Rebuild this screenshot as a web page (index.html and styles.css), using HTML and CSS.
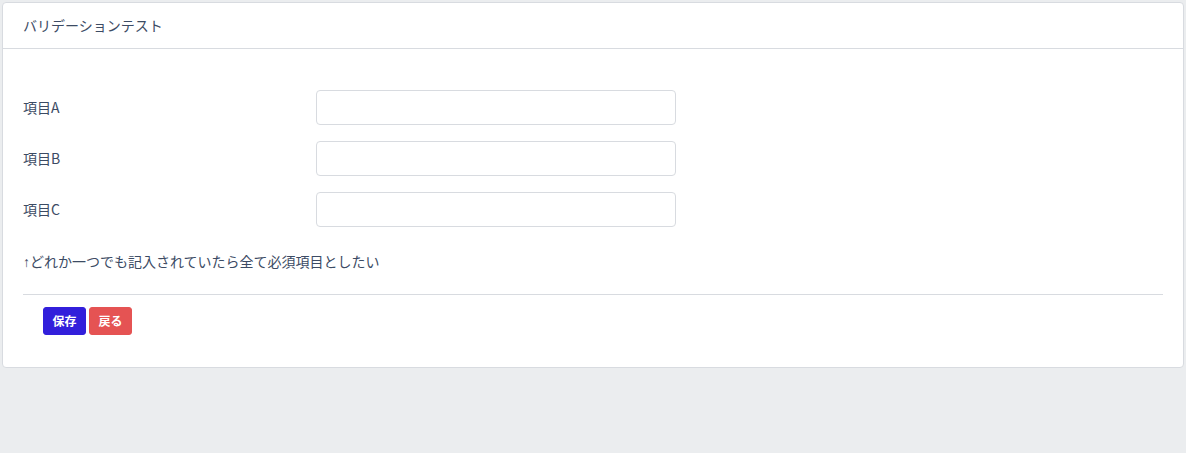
FILE: index.html
```html
<!DOCTYPE html>
<html lang="ja">
<head>
<meta charset="utf-8">
<title>バリデーションテスト</title>
<link rel="stylesheet" href="styles.css">
</head>
<body>
<div class="card">
  <div class="card-header">バリデーションテスト</div>
  <div class="card-body">
    <form class="form">
      <div class="row">
        <label class="label">項目A</label>
        <input class="input" type="text">
      </div>
      <div class="row">
        <label class="label">項目B</label>
        <input class="input" type="text">
      </div>
      <div class="row">
        <label class="label">項目C</label>
        <input class="input" type="text">
      </div>
      <p class="note"><span class="arrow">↑</span>どれか一つでも記入されていたら全て必須項目としたい</p>
      <hr class="divider">
      <div class="actions">
        <button type="button" class="btn btn-primary">保存</button>
        <button type="button" class="btn btn-danger">戻る</button>
      </div>
    </form>
  </div>
</div>
</body>
</html>
```

FILE: styles.css
```css
* { box-sizing: border-box; }
html, body { height: 100%; }
body {
  margin: 0;
  padding: 2px;
  background: #ebedef;
  font-family: "Noto Sans CJK JP", "Noto Sans", sans-serif;
  font-size: 14px;
  line-height: 1.5;
  color: #3c4b64;
}
.card {
  background: #fff;
  border: 1px solid #d8dbe0;
  border-radius: 4px;
}
.card-header {
  height: 46px;
  padding: 0 20px;
  display: flex;
  align-items: center;
  border-bottom: 1px solid #d8dbe0;
}
.card-body {
  padding: 41px 20px 32px;
}
.form { margin: 0; }
.row {
  display: grid;
  grid-template-columns: 293px 360px;
  align-items: center;
  margin-bottom: 16px;
}
.row:nth-of-type(3) { margin-bottom: 0; }
.label { display: block; }
.input {
  height: 35px;
  width: 360px;
  border: 1px solid #d8dbe0;
  border-radius: 4px;
  background: #fff;
  padding: 6px 12px;
  font: inherit;
}
.note {
  margin: 24px 0 0;
  height: 21px;
}
.arrow {
  font-family: "Liberation Sans", sans-serif;
}
.divider {
  margin: 22px 0 12px;
  border: 0;
  border-top: 1px solid #d8dbe0;
}
.actions {
  display: flex;
  gap: 3px;
  padding-left: 20px;
}
.btn {
  height: 28px;
  width: 43px;
  padding: 0;
  border: 1px solid transparent;
  border-radius: 3px;
  color: #fff;
  font-family: inherit;
  font-size: 12px;
  font-weight: 600;
  line-height: 1;
}
.btn-primary { background: #321fdb; border-color: #321fdb; }
.btn-danger { background: #e55353; border-color: #e55353; }
```
